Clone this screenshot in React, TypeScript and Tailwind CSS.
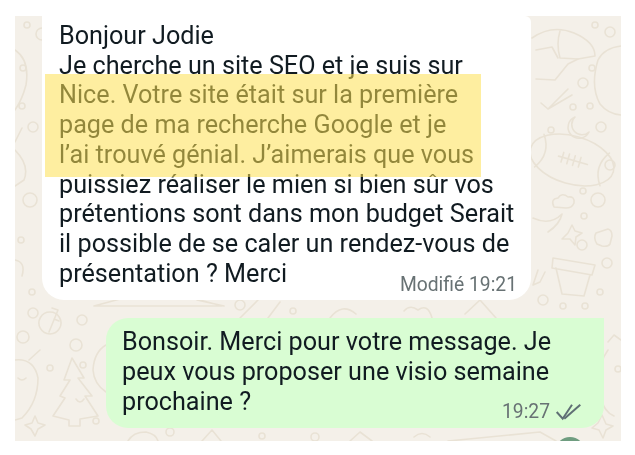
const circles: [number, number, number][] = [
  [27, 25, 3], [42, 34, 6], [23, 68, 3], [22, 106, 3], [33, 127, 5], [30, 200, 7], [21, 240, 3], [32, 292, 3],
  [33, 313, 5], [23, 337, 6], [82, 320, 5], [76, 345, 6], [83, 365, 3], [50, 368, 3], [96, 421, 3],
  [610, 32, 5], [595, 25, 3], [583, 83, 5], [592, 68, 3], [573, 107, 3], [590, 106, 3], [601, 127, 5],
  [551, 130, 3], [610, 165, 5], [583, 191, 3], [598, 200, 7], [584, 216, 3], [582, 245, 5], [607, 263, 5],
  [600, 292, 3], [543, 300, 5], [563, 306, 3], [585, 306, 3], [240, 305, 5], [293, 311, 3], [618, 369, 3],
  [170, 432, 4], [262, 436, 3], [315, 437, 4],
];

const doodles = [
  // helmet, top right
  "M532 38 Q552 24 574 33 Q595 42 595 56 L578 59 L568 64 L555 80 L536 79",
  "M560 31 Q556 44 560 58 L578 59",
  "M536 50 L552 47 L558 58",
  // check marks
  "M541 103 L548 109 L568 89 M548 109 L572 95",
  // moon
  "M575 117 A11 11 0 1 0 589 132 A10 10 0 0 1 575 117",
  // big curve on the right
  "M598 60 Q590 86 600 104 Q608 114 621 115 M621 46 Q604 48 598 60",
  // cloud
  "M554 207 Q550 199 558 198 Q562 192 568 197 Q575 196 574 203 Q572 208 566 208 Z",
  // leaf right
  "M533 218 Q550 226 562 214 M562 214 Q560 224 548 232",
  // pot
  "M553 258 L595 265 L592 275 L552 268 Z M556 268 L562 294 L584 296 L590 275",
  // stars
  "M572 225 L575 231 L582 233 L576 237 L575 245 L570 239 L562 239 L568 233 Z",
  "M545 272 L540 282 L533 285 L538 270",
  "M602 415 L606 424 L613 426 L606 430 L603 438 L599 430 L592 428 L598 423 Z",
  "M35 416 L38 423 L45 425 L38 429 L35 436 L31 429 L25 425 L32 423 Z",
  // rounded box
  "M596 233 L608 229 Q612 230 612 236 L610 244 Q608 247 602 246 L597 244 Q593 238 596 233",
  // key
  "M58 310 L49 332 M58 310 L52 308 M54 319 L59 321",
  "M50 334 A11 11 0 1 0 49.9 334",
  "M40 350 L29 360",
  // leaf with face
  "M15 360 Q34 358 38 378 Q38 402 22 418 L15 420 M18 378 Q22 382 26 378",
  // tree
  "M72 358 L84 378 L78 378 L92 396 L85 396 L98 416 L80 419 L80 426 L69 426 L69 420 L53 416 L65 398 L60 396 L70 380 L64 380 Z",
  "M76 399 Q80 405 84 399",
  // bauble next to green bubble
  "M106 345 Q94 352 93 370 Q94 384 106 392",
  // shapes in the band between the bubbles
  "M94 306 L120 299 M94 306 L222 306 L200 300 M197 300 L224 306 M240 318 L258 300 M268 318 L280 302",
  "M330 318 Q342 302 356 314 M404 311 Q410 304 418 310 Q428 303 432 318",
  "M465 314 L480 300 L496 318",
  // right of green bubble
  "M608 350 Q596 366 600 396 Q604 412 614 416 M608 342 L614 335 L621 340",
  // bottom band
  "M128 441 Q133 432 146 432 Q156 434 158 441",
  "M202 441 L212 430 L221 441 M350 441 L360 432 L372 441 M414 437 Q422 430 430 437",
  "M448 441 L540 432 L556 441",
  // left edge
  "M15 50 Q30 60 26 85 Q22 100 15 110 M15 150 Q30 165 24 180 L15 186",
  "M15 260 Q26 262 22 276 M15 142 L22 128",
];

// football with its stitches
function Football() {
  return (
    <g transform="rotate(16 572 160)">
      <ellipse cx="572" cy="160" rx="43" ry="24" />
      <path d="M558 160 L588 160 M562 155 L562 165 M568 155 L568 165 M574 155 L574 165 M580 155 L580 165 M538 143 Q550 160 538 177 M606 143 Q594 160 606 177" />
    </g>
  );
}

function Wallpaper() {
  return (
    <svg
      className="absolute inset-0 h-full w-full"
      viewBox="15 16 606 425"
      fill="none"
      stroke="#e9e2d5"
      strokeWidth="1.6"
      strokeLinecap="round"
      strokeLinejoin="round"
      aria-hidden="true"
    >
      {circles.map(([cx, cy, r]) => (
        <circle key={`${cx}-${cy}`} cx={cx} cy={cy} r={r} />
      ))}
      {doodles.map((d) => (
        <path key={d} d={d} />
      ))}
      <Football />
    </svg>
  );
}

export default function App() {
  return (
    <div className="h-[455px] w-[635px] overflow-hidden bg-white pl-[15px] pt-[16px] font-['Roboto',sans-serif] text-[#111b21]">
      <div className="relative h-[425px] w-[606px] overflow-hidden bg-[#f4f0e9] blur-[0.35px]">
        <Wallpaper />

        <div className="relative flex flex-col items-start">
          {/* incoming message */}
          <div className="ml-[27px] h-[284px] w-[489px] rounded-b-[22px] rounded-tr-[6px] bg-white pl-[17px] pt-[5px] text-[25.2px] leading-[29.7px]">
            <div>Bonjour Jodie</div>
            <div>Je cherche un site SEO et je suis sur</div>
            <div>Nice. Votre site était sur la première</div>
            <div>page de ma recherche Google et je</div>
            <div>l’ai trouvé génial. J’aimerais que vous</div>
            <div>puissiez réaliser le mien si bien sûr vos</div>
            <div>prétentions sont dans mon budget Serait</div>
            <div>il possible de se caler un rendez-vous de</div>
            <div className="relative">
              présentation ? Merci
              <span className="absolute right-[14px] top-[15px] text-[19.3px] leading-[22px] text-[#687274]">
                Modifié 19:21
              </span>
            </div>
          </div>

          {/* outgoing message */}
          <div className="relative ml-[91px] mt-[18px] h-[110px] w-[498px] rounded-b-[22px] rounded-tl-[22px] bg-[#d9fdd3] pl-[16px] pt-[9px] text-[25.2px] leading-[30px]">
            <div>Bonsoir. Merci pour votre message. Je</div>
            <div>peux vous proposer une visio semaine</div>
            <div>prochaine ?</div>
            <div className="absolute bottom-[5px] right-[23px] flex items-center gap-[5px] text-[19.3px] leading-[22px] text-[#687274]">
              19:27
              <svg width="26" height="20" viewBox="0 0 26 20" fill="none" stroke="#5f6f74" strokeWidth="2" aria-hidden="true">
                <path d="M1.7 10 L7.7 16.7 L17 2.7" />
                <path d="M9.3 16.7 L25.3 2.7" />
              </svg>
            </div>
          </div>
          <div className="absolute left-[518px] top-[302px] h-0 w-0 border-r-[12px] border-t-[12px] border-r-transparent border-t-[#d9fdd3]" />
        </div>

        {/* yellow marker over the message */}
        <div className="absolute left-[30px] top-[58px] h-[103px] w-[436px] bg-[#fde052]/55" />

        {/* avatar peeking in at the bottom */}
        <div className="absolute left-[540px] top-[421px] h-[30px] w-[30px] rounded-full bg-[#6f9d80]" />
      </div>
    </div>
  );
}
